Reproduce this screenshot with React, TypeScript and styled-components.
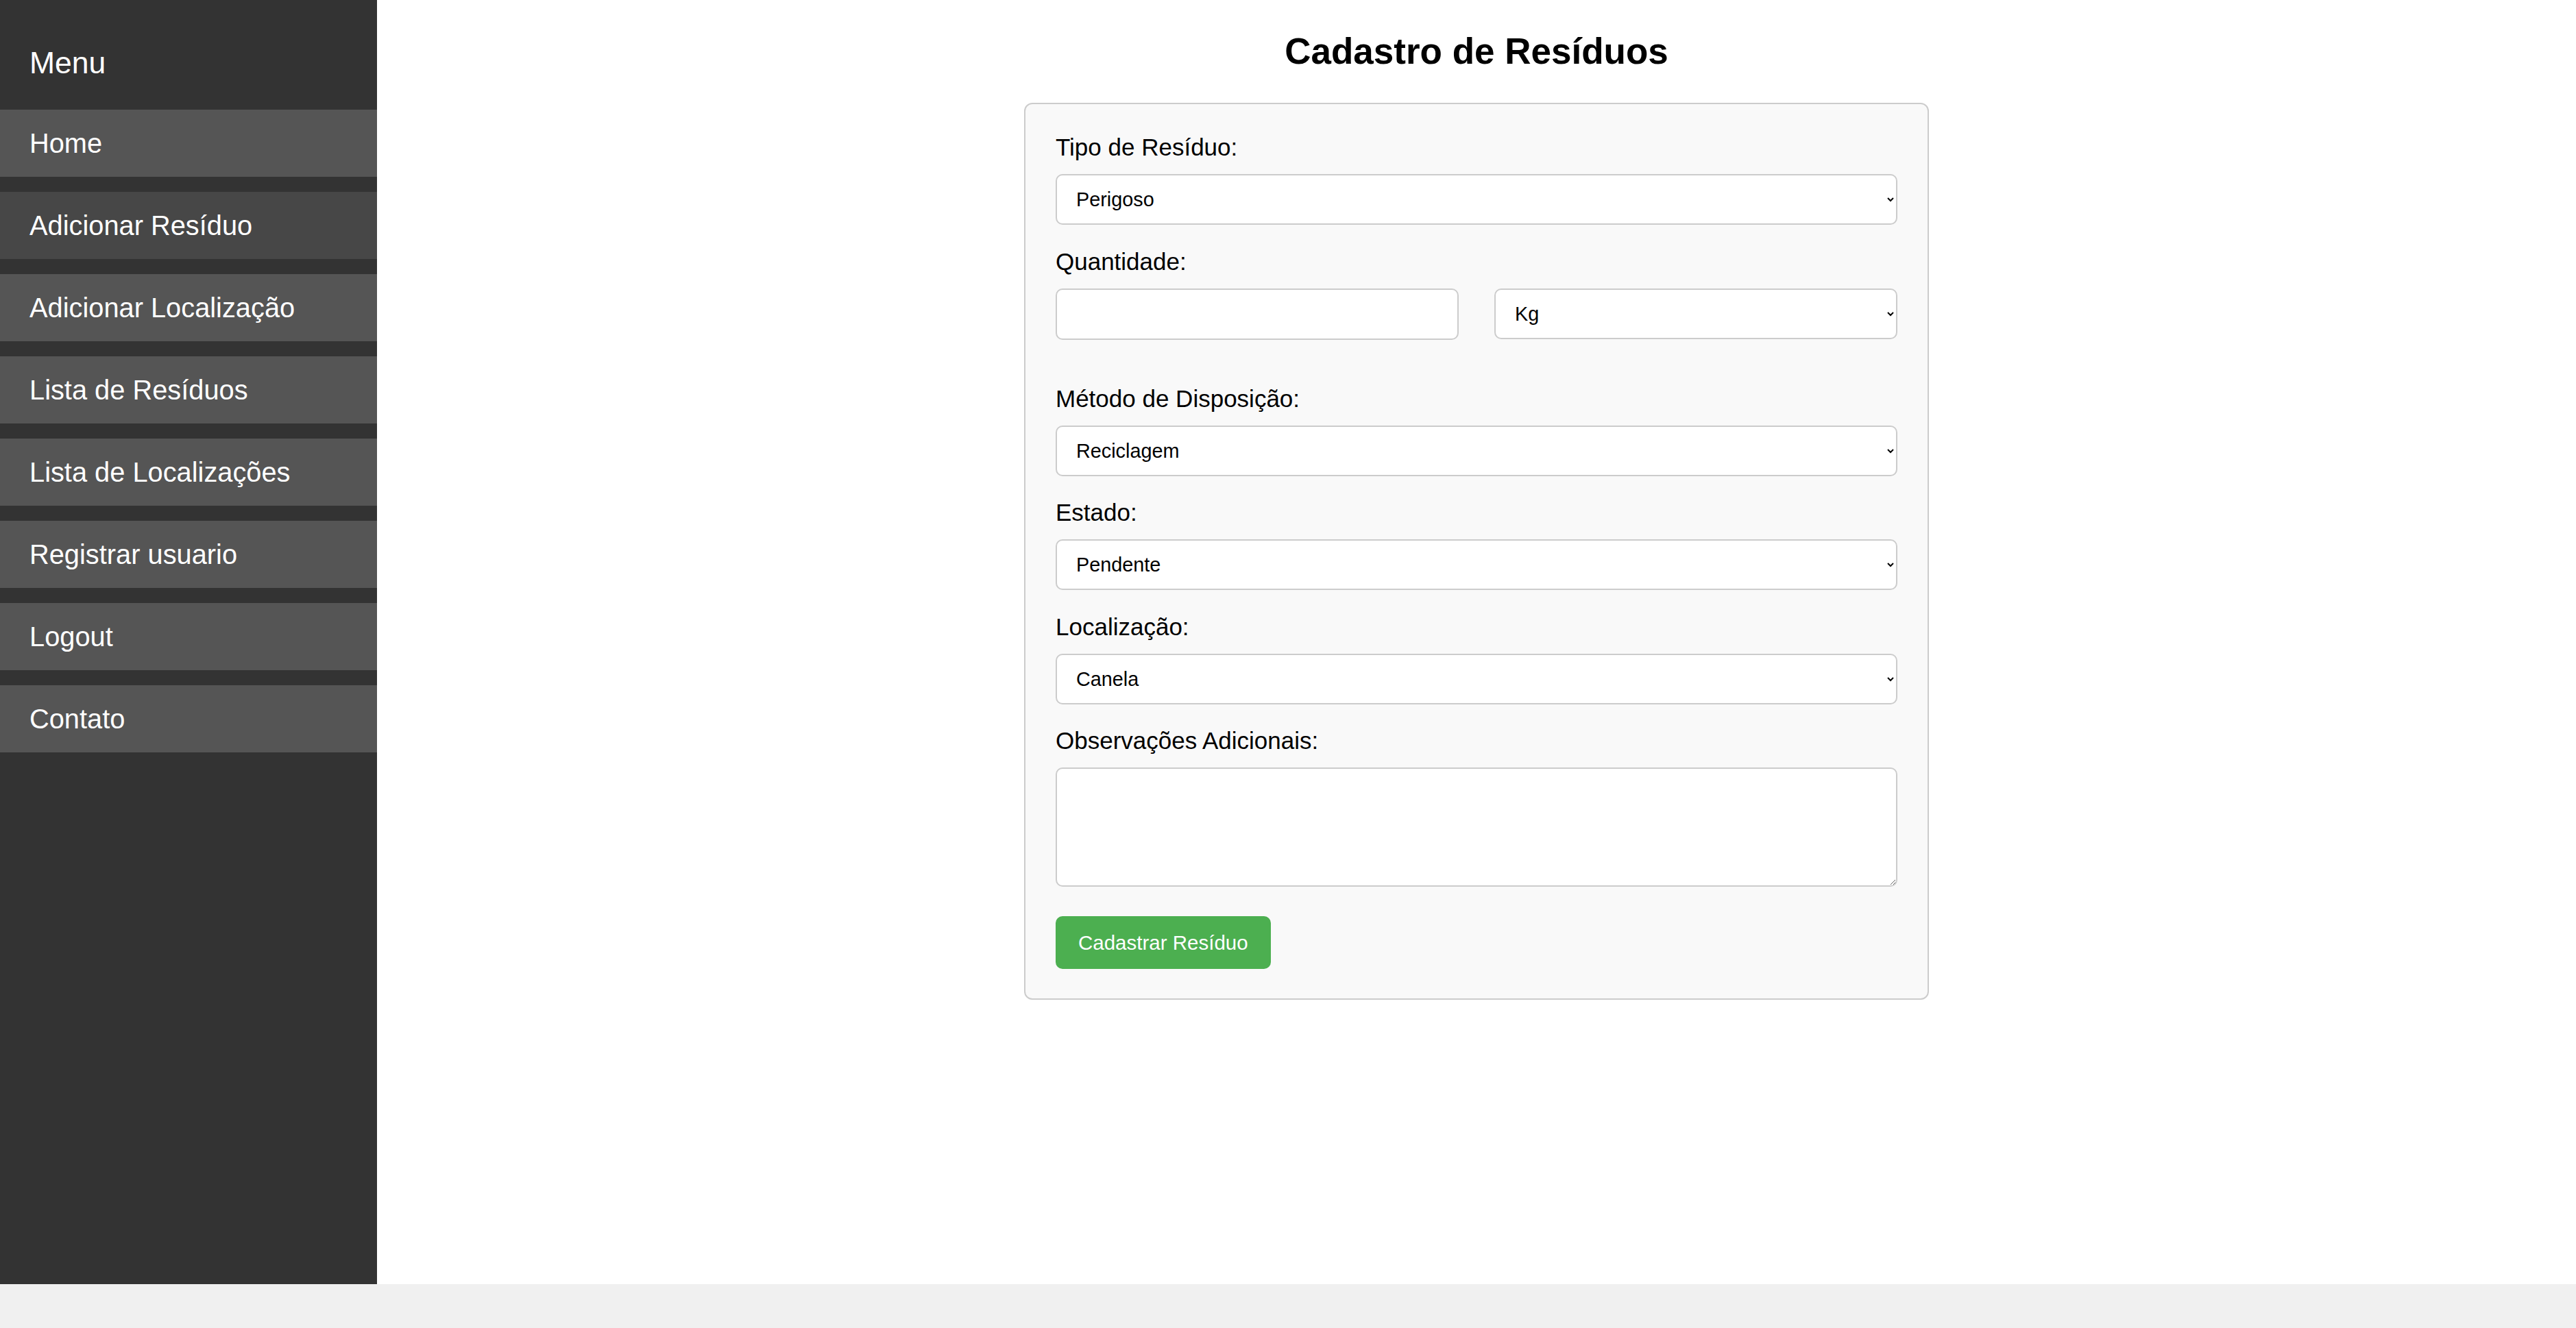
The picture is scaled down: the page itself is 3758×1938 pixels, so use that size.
import React from "react";
import styled, { createGlobalStyle } from "styled-components";

const GlobalStyle = createGlobalStyle`
  html, body {
    margin: 0;
    padding: 0;
    background: #f0f0f0;
    font-family: "Liberation Sans", Arial, sans-serif;
  }
  * { box-sizing: border-box; }
`;

const Layout = styled.div`
  display: flex;
  height: 1874px;
`;

const Sidebar = styled.nav`
  width: 550px;
  flex: 0 0 550px;
  background: #333333;
  color: #ffffff;
`;

const MenuTitle = styled.h3`
  margin: 66px 0 43px;
  padding: 0 43px;
  font-size: 44.5px;
  line-height: 51px;
  font-weight: 400;
`;

const MenuList = styled.ul`
  list-style: none;
  margin: 0;
  padding: 0;
  display: flex;
  flex-direction: column;
  gap: 22px;
`;

const MenuItem = styled.li<{ $active?: boolean }>`
  height: 98px;
  display: flex;
  align-items: center;
  padding: 0 43px;
  background: ${(p) => (p.$active ? "#474747" : "#555555")};
  font-size: 39.8px;
  color: #ffffff;
  white-space: nowrap;
`;

const Main = styled.main`
  flex: 1;
  background: #ffffff;
  padding-top: 44px;
  display: flex;
  flex-direction: column;
  align-items: center;
`;

const Title = styled.h2`
  margin: 0 0 45px;
  font-size: 53px;
  line-height: 61px;
  font-weight: 700;
  color: #000;
`;

const Card = styled.form`
  width: 1320px;
  background: #f9f9f9;
  border: 2px solid #cccccc;
  border-radius: 12px;
  padding: 43px 44px;
  display: flex;
  flex-direction: column;
`;

const Group = styled.div<{ $extra?: boolean }>`
  display: flex;
  flex-direction: column;
  margin-bottom: ${(p) => (p.$extra ? "66px" : "33.5px")};
`;

const Label = styled.label`
  font-size: 35px;
  line-height: 40px;
  color: #000;
  margin-bottom: 19px;
`;

const fieldBase = `
  width: 100%;
  border: 2px solid #cccccc;
  border-radius: 10px;
  background: #ffffff;
  font-family: "Liberation Sans", Arial, sans-serif;
  font-size: 28.8px;
  color: #000;
  outline: none;
`;

const Select = styled.select`
  ${fieldBase}
  height: 74px;
  padding: 0 24px;
`;

const Input = styled.input`
  ${fieldBase}
  height: 75px;
  padding: 0 26px;
`;

const TextArea = styled.textarea`
  ${fieldBase}
  height: 174px;
  padding: 24px 26px;
  display: block;
`;

const Row = styled.div`
  display: grid;
  grid-template-columns: 1fr 1fr;
  column-gap: 52px;
`;

const Button = styled.button`
  align-self: flex-start;
  margin-top: 9.5px;
  height: 77px;
  padding: 0 33px;
  background: #4caf50;
  color: #ffffff;
  border: none;
  border-radius: 10px;
  font-family: "Liberation Sans", Arial, sans-serif;
  font-size: 29.5px;
  cursor: pointer;
`;

const menu = [
  "Home",
  "Adicionar Resíduo",
  "Adicionar Localização",
  "Lista de Resíduos",
  "Lista de Localizações",
  "Registrar usuario",
  "Logout",
  "Contato",
];

export default function App() {
  return (
    <>
      <GlobalStyle />
      <Layout>
        <Sidebar>
          <MenuTitle>Menu</MenuTitle>
          <MenuList>
            {menu.map((m) => (
              <MenuItem key={m} $active={m === "Adicionar Resíduo"}>
                {m}
              </MenuItem>
            ))}
          </MenuList>
        </Sidebar>
        <Main>
          <Title>Cadastro de Resíduos</Title>
          <Card onSubmit={(e) => e.preventDefault()}>
            <Group>
              <Label>Tipo de Resíduo:</Label>
              <Select defaultValue="Perigoso">
                <option>Perigoso</option>
                <option>Não Perigoso</option>
              </Select>
            </Group>
            <Group $extra>
              <Label>Quantidade:</Label>
              <Row>
                <Input type="number" />
                <Select defaultValue="Kg">
                  <option>Kg</option>
                  <option>Litros</option>
                </Select>
              </Row>
            </Group>
            <Group>
              <Label>Método de Disposição:</Label>
              <Select defaultValue="Reciclagem">
                <option>Reciclagem</option>
                <option>Aterro</option>
              </Select>
            </Group>
            <Group>
              <Label>Estado:</Label>
              <Select defaultValue="Pendente">
                <option>Pendente</option>
                <option>Concluído</option>
              </Select>
            </Group>
            <Group>
              <Label>Localização:</Label>
              <Select defaultValue="Canela">
                <option>Canela</option>
              </Select>
            </Group>
            <Group>
              <Label>Observações Adicionais:</Label>
              <TextArea />
            </Group>
            <Button type="submit">Cadastrar Resíduo</Button>
          </Card>
        </Main>
      </Layout>
    </>
  );
}
